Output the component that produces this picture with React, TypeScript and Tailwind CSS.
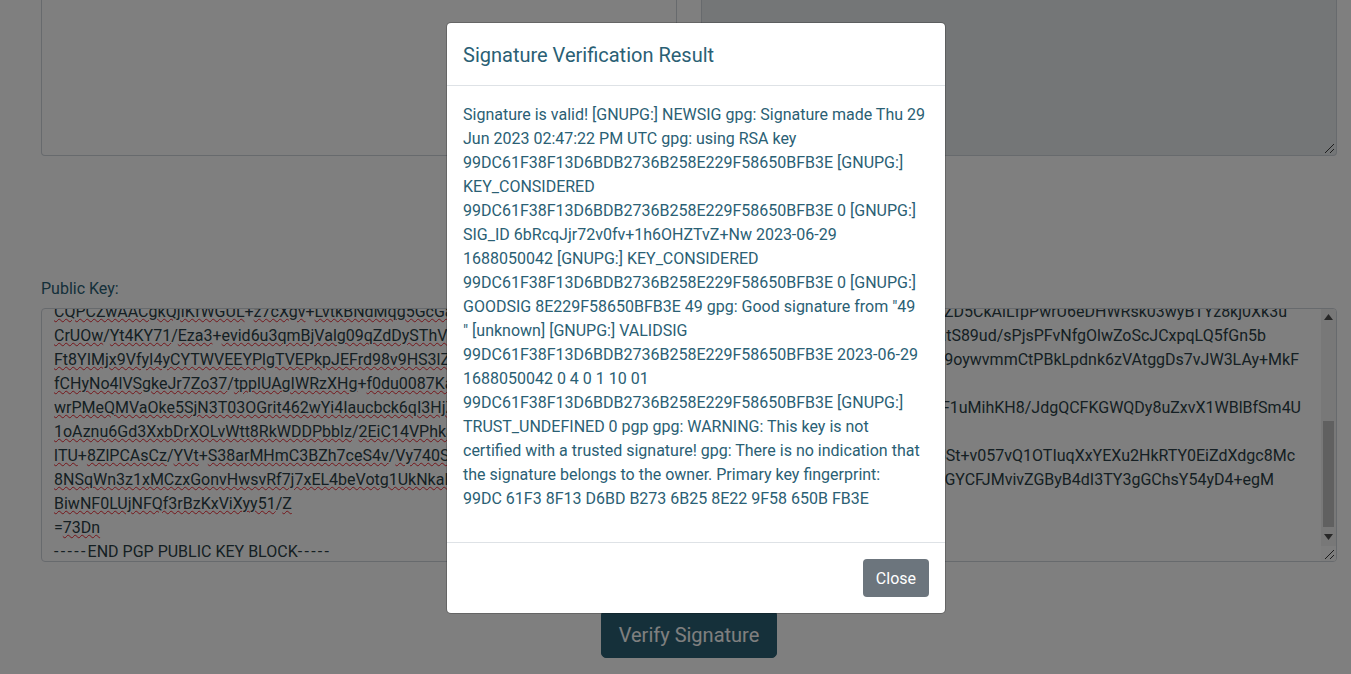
import { FC, ReactElement } from 'react';

type KeyLine = { left: string; right?: string; end?: number };

// only what shows either side of the dialog, the middle of each line is hidden by it
const keyLines: KeyLine[] = [
  { left: 'CQPCZwAACgkQjIKfWGUL+z7cXgv+LvtkBNdMqg5GcGa', right: 'ZD5CkAlLfpPwrU6eDHWRsk03wyBTYz8kj0Xk3u', end: 1233 },
  { left: 'CrUOw/Yt4KY71/Eza3+evid6u3qmBjValg09qZdDySThVa', right: 'atS89ud/sPjsPFvNfgOlwZoScJCxpqLQ5fGn5b', end: 1212 },
  { left: 'Ft8YIMjx9VfyI4yCYTWVEEYPlgTVEPkpJEFrd98v9HS3lZa', right: 'x9oywvmmCtPBkLpdnk6zVAtggDs7vJW3LAy+MkF', end: 1245 },
  { left: 'fCHyNo4lVSgkeJr7Zo37/tpplUAgIWRzXHg+f0du0087Ka' },
  { left: 'wrPMeQMVaOke5SjN3T03OGrit462wYi4Iaucbck6qI3HjZ', right: 'F1uMihKH8/JdgQCFKGWQDy8uZxvX1WBlBfSm4U', end: 1247 },
  { left: '1oAznu6Gd3XxbDrXOLvWtt8RkWDDPbblz/2EiC14VPhkaq' },
  { left: 'lTU+8ZlPCAsCz/YVt+S38arMHmC3BZh7ceS4v/Vy740SYa', right: '5St+v057vQ1OTIuqXxYEXu2HkRTY0EiZdXdgc8Mc', end: 1241 },
  { left: '8NSqWn3z1xMCzxGonvHwsvRf7j7xEL4beVotg1UkNkaLaa', right: 'GYCFJMvivZGByB4dI3TY3gGChsY54yD4+egM', end: 1220 },
  { left: 'BiwNF0LUjNFQf3rBzKxViXyy51/Z' },
  { left: '=73Dn' },
];

const Squiggle: FC<{ text: string }> = ({ text }): ReactElement => (
  <>
    {text.split(/([+/=])/).map((part, i) =>
      /^[+/=]?$/.test(part) ? (
        <span key={i}>{part}</span>
      ) : (
        <span key={i} className="underline decoration-wavy decoration-red-600/80 decoration-1 underline-offset-1">
          {part}
        </span>
      ),
    )}
  </>
);

const Grip: FC = (): ReactElement => (
  <svg width="15" height="15" viewBox="0 0 15 15" className="block">
    <path d="M4 13 L13 4 M9 13 L13 9" stroke="#3a3a3a" strokeWidth="1" fill="none" />
  </svg>
);

const App: FC = (): ReactElement => (
  <div className="relative h-screen overflow-hidden bg-white text-base text-[#2a6074] font-['Roboto',sans-serif]">
    <main className="pl-[41px] pr-[14px]">
      <div className="flex gap-6">
        <div className="h-[156px] flex-1 rounded-b border border-t-0 border-[#ced4da] bg-white" />
        <div className="flex h-[156px] flex-1 flex-col justify-end rounded-b border border-t-0 border-[#ced4da] bg-[#e9ecef]">
          <div className="self-end">
            <Grip />
          </div>
        </div>
      </div>

      <label className="mt-[121px] mb-[7px] block leading-6">Public Key:</label>
      <div className="flex h-[254px] overflow-hidden rounded border border-[#ced4da] bg-white text-[#2b3e46]">
        <div className="min-w-0 flex-1 overflow-hidden whitespace-nowrap px-3 leading-6">
          <div className="-mt-[9px]">
            {keyLines.map((line) => (
              <div
                key={line.left}
                className="flex h-6 justify-between"
                style={line.end ? { width: line.end } : undefined}
              >
                <span>
                  <Squiggle text={line.left} />
                </span>
                {line.right && <span>{line.right}</span>}
              </div>
            ))}
            <div className="h-6">
              <span className="tracking-[2.3px]">-----</span>END PGP PUBLIC KEY BLOCK
              <span className="tracking-[2.3px]">-----</span>
            </div>
          </div>
        </div>
        <div className="flex w-[15px] flex-col items-center bg-[#f1f1f1]">
          <svg width="9" height="6" viewBox="0 0 9 6" className="mt-[5px]">
            <path d="M4.5 0 L9 6 H0 Z" fill="#505050" />
          </svg>
          <div className="mt-[101px] h-[106px] w-[11px] bg-[#c1c1c1]" />
          <svg width="9" height="6" viewBox="0 0 9 6" className="mt-[7px]">
            <path d="M0 0 H9 L4.5 6 Z" fill="#505050" />
          </svg>
          <div className="mt-auto bg-[#fafafa]">
            <Grip />
          </div>
        </div>
      </div>

      <div className="mt-12 flex justify-center">
        <button
          type="button"
          className="h-12 rounded-[5px] border border-[#2a6074] bg-[#2a6074] px-[16.5px] pt-[2px] text-xl text-white"
        >
          Verify Signature
        </button>
      </div>
    </main>

    <div className="absolute inset-0 bg-black/50">
      <div className="mt-[22px] ml-[446px] w-[500px] rounded-[5px] border border-black/20 bg-white bg-clip-padding">
        <div className="border-b border-[#dee2e6] px-4 pt-[17px] pb-[15px]">
          <h5 className="text-xl leading-[30px]">Signature Verification Result</h5>
        </div>
        <div className="px-4 pt-[17px] pb-[15px]">
          <p className="mb-4 leading-6 break-words">
            Signature is valid! [GNUPG:] NEWSIG gpg: Signature made Thu 29 Jun 2023 02:47:22 PM UTC gpg: using RSA key
            99DC61F38F13D6BDB2736B258E229F58650BFB3E [GNUPG:] KEY_CONSIDERED 99DC61F38F13D6BDB2736B258E229F58650BFB3E 0
            [GNUPG:] SIG_ID 6bRcqJjr72v0fv+1h6OHZTvZ+Nw 2023-06-29 1688050042 [GNUPG:] KEY_CONSIDERED
            99DC61F38F13D6BDB2736B258E229F58650BFB3E 0 [GNUPG:] GOODSIG 8E229F58650BFB3E 49 gpg: Good signature from
            &quot;49
            <br />
            &quot; [unknown] [GNUPG:] VALIDSIG 99DC61F38F13D6BDB2736B258E229F58650BFB3E 2023-06-29 1688050042 0 4 0 1 10
            01 99DC61F38F13D6BDB2736B258E229F58650BFB3E [GNUPG:] TRUST_UNDEFINED 0 pgp gpg: WARNING: This key is not
            certified with a trusted signature! gpg: There is no indication that the signature belongs to the owner.
            Primary key fingerprint:
            <br />
            99DC 61F3 8F13 D6BD B273 6B25 8E22 9F58 650B FB3E
          </p>
        </div>
        <div className="flex justify-end border-t border-[#dee2e6] p-4">
          <button type="button" className="h-[38px] rounded bg-[#6c757d] px-[13px] pt-[2px] text-white">
            Close
          </button>
        </div>
      </div>
    </div>
  </div>
);

export default App;
